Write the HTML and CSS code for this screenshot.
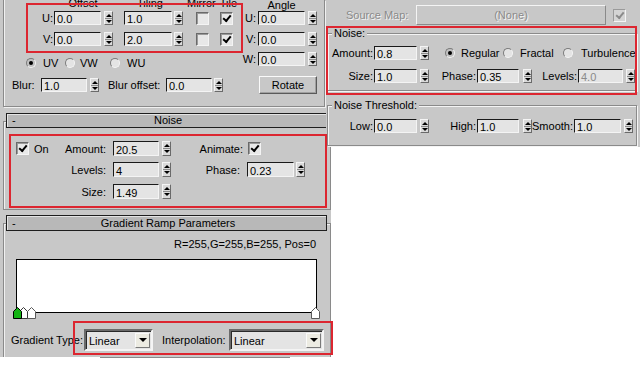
FILE: index.html
```html
<!DOCTYPE html>
<html lang="en">
<head>
  <meta charset="UTF-8" />
  <title>Gradient Ramp Parameters</title>
  <link rel="stylesheet" href="styles.css">
</head>
<body>
<div class="screen">

  <!-- LEFT PANEL: coordinates / noise / gradient ramp rollouts -->
  <div class="left">
    <div class="coords">
      <div class="coords-top">
        <div class="map-cols">
          <div class="hdr">
            <span class="h-offset">Offset</span><span class="h-tiling">Tiling</span><span class="h-mirror">Mirror</span><span class="h-tile">Tile</span>
          </div>
          <div class="row uv-row">
            <span class="lbl uv-lbl">U:</span><span class="fld off-fld">0.0</span><span class="spn off-spn"></span><span class="fld tile-fld">1.0</span><span class="spn tile-spn"></span><span class="chk mirror-chk"></span><span class="chk on tile-chk"></span>
          </div>
          <div class="row uv-row v-row">
            <span class="lbl uv-lbl">V:</span><span class="fld off-fld">0.0</span><span class="spn off-spn"></span><span class="fld tile-fld">2.0</span><span class="spn tile-spn"></span><span class="chk mirror-chk"></span><span class="chk on tile-chk"></span>
          </div>
          <div class="radios">
            <span class="rad on"></span><span class="uv-txt">UV</span>
            <span class="rad vw-rad"></span><span class="vw-txt">VW</span>
            <span class="rad wu-rad"></span><span class="wu-txt">WU</span>
          </div>
        </div>
        <div class="angle-col">
          <div class="hdr angle-hdr">Angle</div>
          <div class="row"><span class="lbl angle-lbl">U:</span><span class="fld angle-fld">0.0</span><span class="spn off-spn"></span></div>
          <div class="row angle-v"><span class="lbl angle-lbl">V:</span><span class="fld angle-fld">0.0</span><span class="spn off-spn"></span></div>
          <div class="row angle-w"><span class="lbl angle-lbl">W:</span><span class="fld angle-fld">0.0</span><span class="spn off-spn"></span></div>
        </div>
      </div>
      <div class="row blur-row">
        <span class="blur-lbl">Blur:</span><span class="fld blur-fld">1.0</span><span class="spn off-spn"></span>
        <span class="bofs-lbl">Blur offset:</span><span class="fld blur-fld">0.0</span><span class="spn bofs-spn"></span>
        <span class="btn rotate">Rotate</span>
      </div>
    </div>

    <div class="roll roll-noise">
      <div class="roll-hd"><span class="roll-dash">-</span><span class="roll-title">Noise</span></div>
      <div class="row n-row n-row1">
        <span class="n-first"><span class="chk on n-chk"></span><span class="on-txt">On</span><span class="n-first-lbl">Amount:</span></span>
        <span class="fld tall n-fld">20.5</span><span class="spn tall n-spn"></span>
        <span class="lbl anim-lbl">Animate:</span><span class="chk on anim-chk"></span>
      </div>
      <div class="row n-row n-row2">
        <span class="lbl n-lbl">Levels:</span>
        <span class="fld tall n-fld">4</span><span class="spn tall n-spn"></span>
        <span class="lbl phase-lbl">Phase:</span><span class="fld tall phase-fld">0.23</span><span class="spn tall tile-spn"></span>
      </div>
      <div class="row n-row n-row3">
        <span class="lbl n-lbl">Size:</span>
        <span class="fld tall n-fld">1.49</span><span class="spn tall n-spn"></span>
      </div>
    </div>

    <div class="roll roll-grad">
      <div class="roll-hd grad-hd"><span class="roll-dash">-</span><span class="roll-title">Gradient Ramp Parameters</span></div>
      <div class="rgb-txt">R=255,G=255,B=255, Pos=0</div>
      <div class="ramp-wrap">
        <div class="ramp"></div>
        <svg class="flags" width="312" height="16" viewBox="0 0 312 16">
          <path d="M15.5 14.5V7.5L19.5 3.5L23.5 7.5V14.5Z" fill="#fff" stroke="#5a5a5a"/>
          <path d="M7.5 14.5V7.5L11.5 3.5L15.5 7.5V14.5Z" fill="#fff" stroke="#3a3a3a"/>
          <path d="M1.5 14.5V7.5L5.5 3.5L9.5 7.5V14.5Z" fill="#14b414" stroke="#000"/>
          <path d="M299.5 14.5V7.5L303.5 3.5L307.5 7.5V14.5Z" fill="#fff" stroke="#5a5a5a"/>
        </svg>
      </div>
      <div class="gt-row">
        <span class="gt-lbl">Gradient Type:</span>
        <span class="dd dd-type"><span class="dd-txt">Linear</span><span class="dd-btn"></span></span>
        <span class="interp-lbl">Interpolation:</span>
        <span class="dd dd-interp"><span class="dd-txt">Linear</span><span class="dd-btn"></span></span>
      </div>
      <div class="cut-line"></div>
    </div>
  </div>

  <!-- RIGHT PANEL: noise map parameters -->
  <div class="right">
    <div class="src-row">
      <span class="src-lbl">Source Map:</span>
      <span class="src-btn">(None)</span>
      <span class="chk on dis src-chk"></span>
    </div>

    <div class="grp">
      <span class="lgd">Noise:</span>
      <div class="row g-row1">
        <span class="lbl g-lbl">Amount:</span><span class="fld g-fld">0.8</span><span class="spn off-spn"></span>
        <span class="rad on reg-rad"></span><span class="reg-txt">Regular</span>
        <span class="rad"></span><span class="frac-txt">Fractal</span>
        <span class="rad"></span><span class="turb-txt">Turbulence</span>
      </div>
      <div class="row g-row2">
        <span class="lbl g-lbl">Size:</span><span class="fld g-fld">1.0</span><span class="spn off-spn"></span>
        <span class="lbl mid-lbl">Phase:</span><span class="fld mid-fld">0.35</span><span class="spn mid-spn"></span>
        <span class="lbl lev-lbl">Levels:</span><span class="fld dis lev-fld">4.0</span><span class="spn off-spn"></span>
      </div>
    </div>

    <div class="grp grp2">
      <span class="lgd">Noise Threshold:</span>
      <div class="row g-row3">
        <span class="lbl g-lbl">Low:</span><span class="fld g-fld">0.0</span><span class="spn off-spn"></span>
        <span class="lbl mid-lbl">High:</span><span class="fld mid-fld">1.0</span><span class="spn mid-spn"></span>
        <span class="lbl smooth-lbl">Smooth:</span><span class="fld smooth-fld">1.0</span><span class="spn off-spn"></span>
      </div>
    </div>
  </div>

  <!-- red highlight boxes drawn over the screenshot -->
  <div class="mark m1"></div>
  <div class="mark m2"></div>
  <div class="mark m3"></div>
  <div class="mark m4"></div>
</div>
</body>
</html>
```

FILE: styles.css
```css
* {
  margin: 0;
  padding: 0;
  box-sizing: border-box;
}

body {
  background-color: #fff;
  color: #000;
  font-family: "Liberation Sans", Arial, sans-serif;
  font-size: 11px;
}

.screen {
  position: relative;
  width: 640px;
  height: 366px;
  overflow: hidden;
  display: flex;
  align-items: flex-start;
}

.left {
  flex: none;
  width: 331px;
  height: 357px;
  background-color: #c8c8c8;
}

.right {
  flex: none;
  width: 314px;
  height: 147px;
  margin-left: -5px;
  padding-top: 5px;
  background-color: #c8c8c8;
}

/* common controls */
.row {
  display: flex;
  align-items: center;
  height: 14px;
  white-space: nowrap;
}

.lbl {
  flex: none;
  text-align: right;
}

.fld {
  flex: none;
  height: 14px;
  padding: 1px 0 0 2px;
  line-height: 12px;
  background-color: #e4e4e4;
  border: 1px solid;
  border-color: #1a1a1a #f4f4f4 #f4f4f4 #1a1a1a;
  overflow: hidden;
}

.fld.tall {
  height: 15px;
  padding-top: 2px;
}

.fld.dis {
  color: #8a8a8a;
}

.spn {
  flex: none;
  width: 9px;
  height: 14px;
  border: 1px solid;
  border-color: #f4f4f4 #6a6a6a #6a6a6a #f4f4f4;
  background: #dadada linear-gradient(#8a8a8a, #8a8a8a) center / 100% 1px no-repeat;
  display: flex;
  flex-direction: column;
  align-items: center;
  justify-content: space-around;
}

.spn.tall {
  height: 15px;
}

.spn::before,
.spn::after {
  content: "";
  width: 0;
  border-left: 3px solid transparent;
  border-right: 3px solid transparent;
}

.spn::before {
  border-bottom: 3px solid #000;
}

.spn::after {
  border-top: 3px solid #000;
}

.chk {
  flex: none;
  width: 13px;
  height: 13px;
  background-color: #e8e8e8;
  border: 1px solid;
  border-color: #6a6a6a #f4f4f4 #f4f4f4 #6a6a6a;
  box-shadow: inset 1px 1px #9a9a9a;
  display: flex;
  align-items: center;
  justify-content: center;
}

.chk.on::after {
  content: "";
  width: 6px;
  height: 3px;
  margin-top: -2px;
  border-left: 2px solid #000;
  border-bottom: 2px solid #000;
  transform: rotate(-50deg);
}

.chk.dis {
  background-color: #d4d4d4;
  border-color: #9a9a9a #f4f4f4 #f4f4f4 #9a9a9a;
  box-shadow: none;
}

.chk.dis::after {
  border-color: #8a8a8a;
}

.rad {
  flex: none;
  width: 10px;
  height: 10px;
  border-radius: 50%;
  background-color: #e4e4e4;
  border: 1px solid;
  border-color: #7a7a7a #f4f4f4 #f4f4f4 #7a7a7a;
  display: flex;
  align-items: center;
  justify-content: center;
}

.rad.on {
  background-color: #c0c0c0;
}

.rad.on::after {
  content: "";
  width: 4px;
  height: 4px;
  border-radius: 50%;
  background-color: #000;
}

.btn {
  flex: none;
  display: flex;
  align-items: center;
  justify-content: center;
  background-color: #c8c8c8;
  border: 1px solid;
  border-color: #fafafa #5a5a5a #5a5a5a #fafafa;
  box-shadow: inset -1px -1px #a0a0a0;
}

/* coordinates rollout (top, cut off) */
.coords {
  margin-left: 3px;
  width: 322px;
  height: 107px;
  border-left: 1px solid #8a8a8a;
  border-right: 1px solid #8a8a8a;
  border-bottom: 1px solid #8a8a8a;
  box-shadow: inset 1px 0 #f0f0f0, 1px 1px #f0f0f0;
}

.coords-top {
  display: flex;
}

.map-cols {
  width: 236px;
}

.hdr {
  height: 11px;
  line-height: 11px;
  display: flex;
  white-space: nowrap;
}

.map-cols .hdr {
  margin-top: -2px;
}

.h-offset { margin-left: 50px; width: 58px; text-align: center; }
.h-tiling { margin-left: 12px; width: 52px; text-align: center; }
.h-mirror { margin-left: 11px; }
.h-tile { margin-left: 4px; }

.uv-row { margin-top: 2px; }
.v-row { margin-top: 7px; }
.uv-lbl { width: 50px; padding-right: 1px; }
.off-fld { width: 47px; }
.off-spn { margin-left: 3px; }
.tile-fld { width: 48px; margin-left: 11px; }
.tile-spn { margin-left: 2px; }
.mirror-chk { margin-left: 13px; }
.tile-chk { margin-left: 11px; }

.radios {
  display: flex;
  align-items: center;
  height: 11px;
  margin-top: 11px;
  padding-left: 22px;
  white-space: nowrap;
}

.uv-txt { margin-left: 7px; width: 22px; }
.vw-txt { margin-left: 5px; width: 30px; }
.wu-txt { margin-left: 7px; }

.angle-col {
  width: 84px;
}

.angle-hdr {
  display: block;
  margin-left: 18px;
  width: 47px;
  text-align: center;
}

.angle-v { margin-top: 7px; }
.angle-w { margin-top: 6px; }
.angle-lbl { width: 17px; padding-right: 1px; }
.angle-fld { width: 47px; margin-left: 1px; }

.blur-row {
  height: 18px;
  margin-top: 8px;
}

.blur-lbl { width: 37px; padding-left: 8px; }
.blur-fld { width: 46px; }
.bofs-lbl { margin-left: 9px; width: 58px; }
.bofs-spn { margin-left: 2px; }

.rotate {
  margin-left: 36px;
  width: 58px;
  height: 18px;
}

/* rollouts */
.roll {
  margin-left: 3px;
  width: 328px;
  border: 1px solid #8a8a8a;
  box-shadow: inset 1px 1px #f0f0f0;
}

.roll-noise {
  margin-top: 14px;
  height: 89px;
}

.roll-grad {
  margin-top: 13px;
  height: 134px;
  border-bottom: none;
}

.roll-hd {
  display: grid;
  align-items: center;
  margin: -9px 0 0 2px;
  width: 321px;
  height: 15px;
  padding-left: 3px;
  line-height: 13px;
  background-color: #b8b8b8;
  border: 1px solid #1e1e1e;
  box-shadow: inset 1px 1px #e4e4e4;
}

.grad-hd {
  height: 16px;
}

.roll-hd > span {
  grid-area: 1 / 1;
}

.roll-dash {
  justify-self: start;
  margin-left: 2px;
}

.roll-title {
  justify-self: center;
}

.n-row {
  height: 15px;
}

.n-row1 { margin-top: 13px; }
.n-row2 { margin-top: 6px; }
.n-row3 { margin-top: 7px; }

.n-first {
  display: flex;
  align-items: center;
  width: 102px;
}

.n-chk { margin-left: 12px; }
.on-txt { margin-left: 5px; }

.n-first-lbl {
  flex: 1;
  text-align: right;
}

.n-lbl { width: 102px; }
.n-fld { width: 46px; margin-left: 7px; }
.n-spn { margin-left: 3px; }
.anim-lbl { width: 72px; }
.anim-chk { margin-left: 5px; }
.phase-lbl { width: 69px; }
.phase-fld { width: 47px; margin-left: 7px; }

.rgb-txt {
  margin-top: 7px;
  height: 13px;
  line-height: 13px;
  padding-right: 14px;
  text-align: right;
}

.ramp-wrap {
  position: relative;
  margin: 8px 0 0 12px;
  width: 301px;
  height: 54px;
}

.ramp {
  height: 100%;
  background-color: #fff;
  border: 1px solid #000;
}

.flags {
  position: absolute;
  left: -4px;
  top: 45px;
}

.gt-row {
  display: flex;
  align-items: center;
  margin-top: 16px;
  height: 22px;
  white-space: nowrap;
}

.gt-lbl { width: 80px; padding-left: 7px; }
.interp-lbl { margin-left: 9px; width: 67px; }

.dd {
  flex: none;
  display: flex;
  align-items: center;
  height: 22px;
  background-color: #e4e4e4;
  border: 2px solid;
  border-color: #6a6a6a #f4f4f4 #f4f4f4 #6a6a6a;
  box-shadow: inset 1px 1px #2a2a2a;
}

.dd-type { width: 69px; }
.dd-interp { width: 95px; }

.dd-txt {
  flex: 1;
  padding: 1px 0 0 3px;
}

.dd-btn {
  width: 15px;
  height: 15px;
  margin-right: 1px;
  background-color: #ecebe2;
  border: 1px solid;
  border-color: #fafafa #7a7a7a #7a7a7a #fafafa;
  display: flex;
  align-items: center;
  justify-content: center;
}

.dd-btn::after {
  content: "";
  border-left: 4px solid transparent;
  border-right: 4px solid transparent;
  border-top: 4px solid #000;
}

.cut-line {
  margin: 6px 0 0 96px;
  width: 190px;
  height: 1px;
  background-color: #8a8a8a;
}

/* right panel */
.src-row {
  display: flex;
  align-items: center;
  height: 20px;
  white-space: nowrap;
}

.src-lbl {
  margin-left: 20px;
  width: 70px;
  color: #8a8a8a;
  text-shadow: 1px 1px #f4f4f4;
}

.src-btn {
  width: 190px;
  height: 20px;
  line-height: 18px;
  text-align: center;
  color: #8a8a8a;
  text-shadow: 1px 1px #f4f4f4;
  border: 1px solid;
  border-color: #f4f4f4 #8a8a8a #8a8a8a #f4f4f4;
}

.src-chk { margin-left: 7px; }

.grp {
  margin: 8px 0 0 1px;
  width: 310px;
  padding-bottom: 7px;
  border: 1px solid #8a8a8a;
  box-shadow: inset 1px 1px #f4f4f4, 1px 1px #f4f4f4;
}

.grp2 {
  margin-top: 14px;
  padding-bottom: 12px;
}

.lgd {
  display: table;
  margin: -7px 0 0 4px;
  padding: 0 2px;
  line-height: 12px;
  background-color: #c8c8c8;
}

.g-row1 { margin-top: 7px; }
.g-row2 { margin-top: 9px; }
.g-row3 { margin-top: 8px; }

.g-lbl { width: 45px; }
.g-fld { width: 43px; margin-left: 1px; }
.reg-rad { margin-left: 16px; }
.reg-txt { margin-left: 6px; width: 42px; }
.frac-txt { margin-left: 7px; width: 43px; }
.turb-txt { margin-left: 8px; }
.mid-lbl { width: 47px; }
.mid-fld { width: 42px; margin-left: 1px; }
.mid-spn { margin-left: 4px; }
.lev-lbl { width: 45px; }
.lev-fld { width: 45px; margin-left: 1px; }
.smooth-lbl { width: 41px; }
.smooth-fld { width: 47px; margin-left: 1px; }

/* red annotation boxes */
.mark {
  position: absolute;
  border: 2px solid #dc2630;
}

.m1 { left: 26px; top: 3px; width: 217px; height: 50px; }
.m2 { left: 9px; top: 134px; width: 318px; height: 74px; }
.m3 { left: 73px; top: 321px; width: 260px; height: 34px; }
.m4 { left: 326px; top: 26px; width: 311px; height: 69px; }
```
